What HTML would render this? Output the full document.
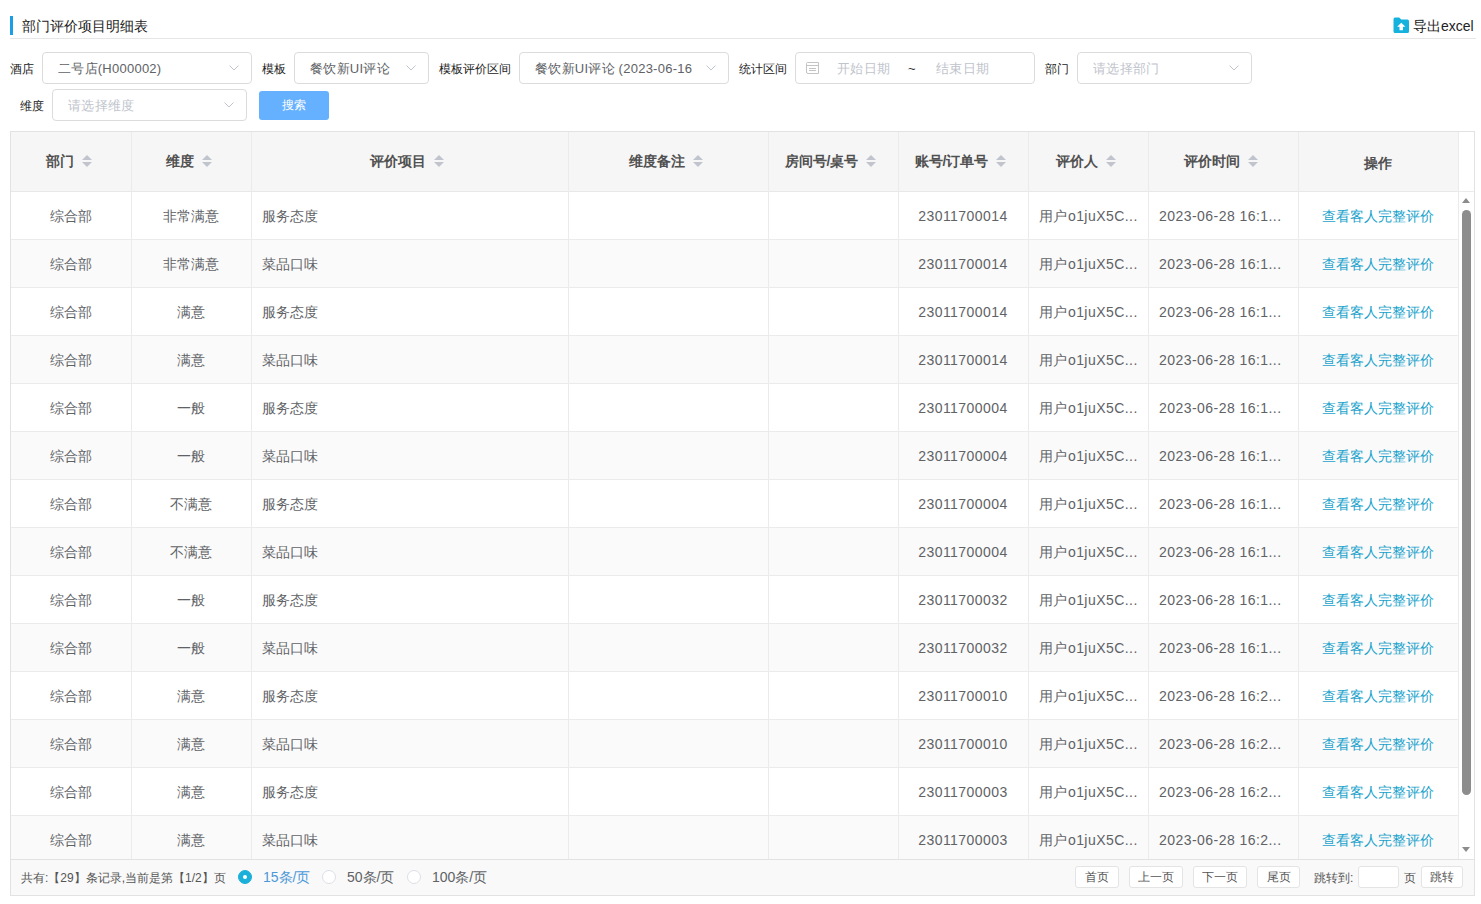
<!DOCTYPE html>
<html><head><meta charset="utf-8">
<style>
*{box-sizing:border-box;margin:0;padding:0}
html,body{width:1481px;height:904px;overflow:hidden;background:#fff;font-family:"Liberation Sans",sans-serif;color:#333}
.abs{position:absolute}
#title{left:10px;top:16px;width:3px;height:19px;background:#1a9ee6}
#ttext{left:22px;top:17px;font-size:14px;line-height:19px;color:#222}
#hline{left:10px;top:38px;width:1466px;height:1px;background:#e6e6e6}
#exp{left:1393px;top:16.5px;width:16.5px;height:16.5px}
#exptext{left:1413px;top:17px;font-size:14px;line-height:19px;color:#222}
.lbl{font-size:12px;line-height:16px;color:#222;top:61px}
.sel{border:1px solid #dcdcdc;border-radius:4px;background:#fff;height:32px}
.sel .t{position:absolute;left:15px;top:0;line-height:31px;font-size:13px;letter-spacing:.25px;color:#606266;white-space:nowrap;overflow:hidden}
.sel .ph{color:#c0c4cc}
.chev{position:absolute;right:12px;top:12px;width:10px;height:6px}
#btn{left:259px;top:91px;width:70px;height:29px;background:#66b1ff;border-radius:3px;color:#fff;font-size:12px;line-height:29px;text-align:center}

#tbl{left:10px;top:131px;width:1465px;height:765px;border:1px solid #e2e2e2}
#thead{left:11px;top:132px;width:1447px;height:60px;background:#f6f6f6;border-bottom:1px solid #e8e8e8}
.th{top:132px;height:59px;line-height:59px;text-align:center;font-size:14px;font-weight:bold;color:#505050;white-space:nowrap}
.th.nos{line-height:62px}
.sort{display:inline-block;position:relative;width:10px;height:12px;margin-left:8px;margin-right:5px;vertical-align:-1px}
.sort b{position:absolute;left:0;width:0;height:0;border-left:5px solid transparent;border-right:5px solid transparent}
.sort .up{top:0;border-bottom:5px solid #c0c4cc}
.sort .dn{top:7px;border-top:5px solid #c0c4cc}
#body{left:11px;top:192px;width:1447px;height:667px;overflow:hidden}
.row{left:11px;width:1447px;height:48px;border-bottom:1px solid #ebebeb}
.even{background:#fafafa}
.td{top:0;height:47px;line-height:49px;font-size:14px;color:#606266;white-space:nowrap}
.td.c{text-align:center}
.td.l{padding-left:11px}
.td.link{color:#1aa3cc}
.vl{top:132px;width:1px;height:727px;background:#ebebeb}
#clip{position:absolute;left:0;top:192px;width:1481px;height:667px;overflow:hidden}
#foot{left:11px;top:859px;width:1463px;height:36px;background:#f9f9f9;border-top:1px solid #e2e2e2}

.ft{top:861px;height:35px;line-height:35px;font-size:12px;color:#555;white-space:nowrap}
.radio{top:870px;width:14px;height:14px;border-radius:50%;border:1px solid #dcdfe6;background:#fff}
.radio.on{background:#1ab0d9;border-color:#1ab0d9}
.radio.on:after{content:"";position:absolute;left:4px;top:4px;width:4px;height:4px;border-radius:50%;background:#fff}
.ft.opt{top:860px;font-size:14px;color:#606266}
.pb{top:866px;height:22px;border:1px solid #e4e4e4;border-radius:3px;background:#fff;font-size:12px;line-height:20px;text-align:center;color:#555}
#sbar{left:1462px;top:210px;width:9px;height:585px;border-radius:5px;background:#8c8c8c}
.sarr{left:1462px;width:0;height:0;border-left:4.5px solid transparent;border-right:4.5px solid transparent}
.lat{letter-spacing:0.45px}
</style></head><body>
<div class="abs" id="title"></div>
<div class="abs" id="ttext">部门评价项目明细表</div>
<div class="abs" id="hline"></div>
<svg class="abs" id="exp" viewBox="0 0 16 16"><path d="M0.5 2Q0.5 0.5 2 0.5H6L8 2.5H14Q15.5 2.5 15.5 4V14Q15.5 15.5 14 15.5H2Q0.5 15.5 0.5 14Z" fill="#14b2dd"/><path d="M8 5.5L4 9.5H6.3V12.8H9.7V9.5H12Z" fill="#fff"/></svg>
<div class="abs" id="exptext">导出excel</div>

<div class="abs lbl" style="left:10px">酒店</div>
<div class="abs sel" style="left:42px;top:52px;width:210px"><span class="t">二号店(H000002)</span><svg class="chev" viewBox="0 0 10 6"><path d="M0.5 0.5L5 5L9.5 0.5" stroke="#c0c4cc" fill="none"/></svg></div>
<div class="abs lbl" style="left:262px">模板</div>
<div class="abs sel" style="left:294px;top:52px;width:135px"><span class="t">餐饮新UI评论</span><svg class="chev" viewBox="0 0 10 6"><path d="M0.5 0.5L5 5L9.5 0.5" stroke="#c0c4cc" fill="none"/></svg></div>
<div class="abs lbl" style="left:439px">模板评价区间</div>
<div class="abs sel" style="left:519px;top:52px;width:210px"><span class="t">餐饮新UI评论 (2023-06-16</span><svg class="chev" viewBox="0 0 10 6"><path d="M0.5 0.5L5 5L9.5 0.5" stroke="#c0c4cc" fill="none"/></svg></div>
<div class="abs lbl" style="left:739px">统计区间</div>
<div class="abs sel" style="left:795px;top:52px;width:240px"><span class="t ph" style="left:41px">开始日期</span><span class="t" style="left:112px;color:#333">~</span><span class="t ph" style="left:140px">结束日期</span></div>
<svg class="abs" style="left:806px;top:62px;width:13px;height:12px" viewBox="0 0 13 12"><path d="M0.5 1.5V10Q0.5 11.5 2 11.5H12.5V0.5H1.5Q0.5 0.5 0.5 1.5Z" fill="none" stroke="#c4c4c4"/><path d="M0.5 3.5h12M3 6.5h7M3 8.5h7" stroke="#c4c4c4" fill="none"/></svg>
<div class="abs lbl" style="left:1045px">部门</div>
<div class="abs sel" style="left:1077px;top:52px;width:175px"><span class="t ph">请选择部门</span><svg class="chev" viewBox="0 0 10 6"><path d="M0.5 0.5L5 5L9.5 0.5" stroke="#c0c4cc" fill="none"/></svg></div>
<div class="abs lbl" style="left:20px;top:98px">维度</div>
<div class="abs sel" style="left:52px;top:89px;width:195px"><span class="t ph">请选择维度</span><svg class="chev" viewBox="0 0 10 6"><path d="M0.5 0.5L5 5L9.5 0.5" stroke="#c0c4cc" fill="none"/></svg></div>
<div class="abs" id="btn">搜索</div>

<div class="abs" id="tbl"></div>
<div class="abs" id="thead"></div>
<div class="abs th" style="left:11px;width:120px">部门<i class="sort"><b class="up"></b><b class="dn"></b></i></div>
<div class="abs th" style="left:131px;width:120px">维度<i class="sort"><b class="up"></b><b class="dn"></b></i></div>
<div class="abs th" style="left:251px;width:317px">评价项目<i class="sort"><b class="up"></b><b class="dn"></b></i></div>
<div class="abs th" style="left:568px;width:200px">维度备注<i class="sort"><b class="up"></b><b class="dn"></b></i></div>
<div class="abs th" style="left:768px;width:130px">房间号/桌号<i class="sort"><b class="up"></b><b class="dn"></b></i></div>
<div class="abs th" style="left:898px;width:130px">账号/订单号<i class="sort"><b class="up"></b><b class="dn"></b></i></div>
<div class="abs th" style="left:1028px;width:120px">评价人<i class="sort"><b class="up"></b><b class="dn"></b></i></div>
<div class="abs th" style="left:1148px;width:150px">评价时间<i class="sort"><b class="up"></b><b class="dn"></b></i></div>
<div class="abs th nos" style="left:1298px;width:160px">操作</div>
<div id="clip">
<div class="abs row odd" style="top:0px"></div>
<div class="abs td c" style="left:11px;width:120px;top:0px">综合部</div>
<div class="abs td c" style="left:131px;width:120px;top:0px">非常满意</div>
<div class="abs td l" style="left:251px;width:317px;top:0px">服务态度</div>
<div class="abs td c lat" style="left:898px;width:130px;top:0px">23011700014</div>
<div class="abs td l lat" style="left:1028px;width:120px;top:0px">用户o1juX5C...</div>
<div class="abs td l lat" style="left:1148px;width:150px;top:0px">2023-06-28 16:1...</div>
<div class="abs td c link" style="left:1298px;width:160px;top:0px">查看客人完整评价</div>
<div class="abs row even" style="top:48px"></div>
<div class="abs td c" style="left:11px;width:120px;top:48px">综合部</div>
<div class="abs td c" style="left:131px;width:120px;top:48px">非常满意</div>
<div class="abs td l" style="left:251px;width:317px;top:48px">菜品口味</div>
<div class="abs td c lat" style="left:898px;width:130px;top:48px">23011700014</div>
<div class="abs td l lat" style="left:1028px;width:120px;top:48px">用户o1juX5C...</div>
<div class="abs td l lat" style="left:1148px;width:150px;top:48px">2023-06-28 16:1...</div>
<div class="abs td c link" style="left:1298px;width:160px;top:48px">查看客人完整评价</div>
<div class="abs row odd" style="top:96px"></div>
<div class="abs td c" style="left:11px;width:120px;top:96px">综合部</div>
<div class="abs td c" style="left:131px;width:120px;top:96px">满意</div>
<div class="abs td l" style="left:251px;width:317px;top:96px">服务态度</div>
<div class="abs td c lat" style="left:898px;width:130px;top:96px">23011700014</div>
<div class="abs td l lat" style="left:1028px;width:120px;top:96px">用户o1juX5C...</div>
<div class="abs td l lat" style="left:1148px;width:150px;top:96px">2023-06-28 16:1...</div>
<div class="abs td c link" style="left:1298px;width:160px;top:96px">查看客人完整评价</div>
<div class="abs row even" style="top:144px"></div>
<div class="abs td c" style="left:11px;width:120px;top:144px">综合部</div>
<div class="abs td c" style="left:131px;width:120px;top:144px">满意</div>
<div class="abs td l" style="left:251px;width:317px;top:144px">菜品口味</div>
<div class="abs td c lat" style="left:898px;width:130px;top:144px">23011700014</div>
<div class="abs td l lat" style="left:1028px;width:120px;top:144px">用户o1juX5C...</div>
<div class="abs td l lat" style="left:1148px;width:150px;top:144px">2023-06-28 16:1...</div>
<div class="abs td c link" style="left:1298px;width:160px;top:144px">查看客人完整评价</div>
<div class="abs row odd" style="top:192px"></div>
<div class="abs td c" style="left:11px;width:120px;top:192px">综合部</div>
<div class="abs td c" style="left:131px;width:120px;top:192px">一般</div>
<div class="abs td l" style="left:251px;width:317px;top:192px">服务态度</div>
<div class="abs td c lat" style="left:898px;width:130px;top:192px">23011700004</div>
<div class="abs td l lat" style="left:1028px;width:120px;top:192px">用户o1juX5C...</div>
<div class="abs td l lat" style="left:1148px;width:150px;top:192px">2023-06-28 16:1...</div>
<div class="abs td c link" style="left:1298px;width:160px;top:192px">查看客人完整评价</div>
<div class="abs row even" style="top:240px"></div>
<div class="abs td c" style="left:11px;width:120px;top:240px">综合部</div>
<div class="abs td c" style="left:131px;width:120px;top:240px">一般</div>
<div class="abs td l" style="left:251px;width:317px;top:240px">菜品口味</div>
<div class="abs td c lat" style="left:898px;width:130px;top:240px">23011700004</div>
<div class="abs td l lat" style="left:1028px;width:120px;top:240px">用户o1juX5C...</div>
<div class="abs td l lat" style="left:1148px;width:150px;top:240px">2023-06-28 16:1...</div>
<div class="abs td c link" style="left:1298px;width:160px;top:240px">查看客人完整评价</div>
<div class="abs row odd" style="top:288px"></div>
<div class="abs td c" style="left:11px;width:120px;top:288px">综合部</div>
<div class="abs td c" style="left:131px;width:120px;top:288px">不满意</div>
<div class="abs td l" style="left:251px;width:317px;top:288px">服务态度</div>
<div class="abs td c lat" style="left:898px;width:130px;top:288px">23011700004</div>
<div class="abs td l lat" style="left:1028px;width:120px;top:288px">用户o1juX5C...</div>
<div class="abs td l lat" style="left:1148px;width:150px;top:288px">2023-06-28 16:1...</div>
<div class="abs td c link" style="left:1298px;width:160px;top:288px">查看客人完整评价</div>
<div class="abs row even" style="top:336px"></div>
<div class="abs td c" style="left:11px;width:120px;top:336px">综合部</div>
<div class="abs td c" style="left:131px;width:120px;top:336px">不满意</div>
<div class="abs td l" style="left:251px;width:317px;top:336px">菜品口味</div>
<div class="abs td c lat" style="left:898px;width:130px;top:336px">23011700004</div>
<div class="abs td l lat" style="left:1028px;width:120px;top:336px">用户o1juX5C...</div>
<div class="abs td l lat" style="left:1148px;width:150px;top:336px">2023-06-28 16:1...</div>
<div class="abs td c link" style="left:1298px;width:160px;top:336px">查看客人完整评价</div>
<div class="abs row odd" style="top:384px"></div>
<div class="abs td c" style="left:11px;width:120px;top:384px">综合部</div>
<div class="abs td c" style="left:131px;width:120px;top:384px">一般</div>
<div class="abs td l" style="left:251px;width:317px;top:384px">服务态度</div>
<div class="abs td c lat" style="left:898px;width:130px;top:384px">23011700032</div>
<div class="abs td l lat" style="left:1028px;width:120px;top:384px">用户o1juX5C...</div>
<div class="abs td l lat" style="left:1148px;width:150px;top:384px">2023-06-28 16:1...</div>
<div class="abs td c link" style="left:1298px;width:160px;top:384px">查看客人完整评价</div>
<div class="abs row even" style="top:432px"></div>
<div class="abs td c" style="left:11px;width:120px;top:432px">综合部</div>
<div class="abs td c" style="left:131px;width:120px;top:432px">一般</div>
<div class="abs td l" style="left:251px;width:317px;top:432px">菜品口味</div>
<div class="abs td c lat" style="left:898px;width:130px;top:432px">23011700032</div>
<div class="abs td l lat" style="left:1028px;width:120px;top:432px">用户o1juX5C...</div>
<div class="abs td l lat" style="left:1148px;width:150px;top:432px">2023-06-28 16:1...</div>
<div class="abs td c link" style="left:1298px;width:160px;top:432px">查看客人完整评价</div>
<div class="abs row odd" style="top:480px"></div>
<div class="abs td c" style="left:11px;width:120px;top:480px">综合部</div>
<div class="abs td c" style="left:131px;width:120px;top:480px">满意</div>
<div class="abs td l" style="left:251px;width:317px;top:480px">服务态度</div>
<div class="abs td c lat" style="left:898px;width:130px;top:480px">23011700010</div>
<div class="abs td l lat" style="left:1028px;width:120px;top:480px">用户o1juX5C...</div>
<div class="abs td l lat" style="left:1148px;width:150px;top:480px">2023-06-28 16:2...</div>
<div class="abs td c link" style="left:1298px;width:160px;top:480px">查看客人完整评价</div>
<div class="abs row even" style="top:528px"></div>
<div class="abs td c" style="left:11px;width:120px;top:528px">综合部</div>
<div class="abs td c" style="left:131px;width:120px;top:528px">满意</div>
<div class="abs td l" style="left:251px;width:317px;top:528px">菜品口味</div>
<div class="abs td c lat" style="left:898px;width:130px;top:528px">23011700010</div>
<div class="abs td l lat" style="left:1028px;width:120px;top:528px">用户o1juX5C...</div>
<div class="abs td l lat" style="left:1148px;width:150px;top:528px">2023-06-28 16:2...</div>
<div class="abs td c link" style="left:1298px;width:160px;top:528px">查看客人完整评价</div>
<div class="abs row odd" style="top:576px"></div>
<div class="abs td c" style="left:11px;width:120px;top:576px">综合部</div>
<div class="abs td c" style="left:131px;width:120px;top:576px">满意</div>
<div class="abs td l" style="left:251px;width:317px;top:576px">服务态度</div>
<div class="abs td c lat" style="left:898px;width:130px;top:576px">23011700003</div>
<div class="abs td l lat" style="left:1028px;width:120px;top:576px">用户o1juX5C...</div>
<div class="abs td l lat" style="left:1148px;width:150px;top:576px">2023-06-28 16:2...</div>
<div class="abs td c link" style="left:1298px;width:160px;top:576px">查看客人完整评价</div>
<div class="abs row even" style="top:624px"></div>
<div class="abs td c" style="left:11px;width:120px;top:624px">综合部</div>
<div class="abs td c" style="left:131px;width:120px;top:624px">满意</div>
<div class="abs td l" style="left:251px;width:317px;top:624px">菜品口味</div>
<div class="abs td c lat" style="left:898px;width:130px;top:624px">23011700003</div>
<div class="abs td l lat" style="left:1028px;width:120px;top:624px">用户o1juX5C...</div>
<div class="abs td l lat" style="left:1148px;width:150px;top:624px">2023-06-28 16:2...</div>
<div class="abs td c link" style="left:1298px;width:160px;top:624px">查看客人完整评价</div>
</div>
<div class="abs" id="foot"></div>
<div class="abs vl" style="left:131px"></div>
<div class="abs vl" style="left:251px"></div>
<div class="abs vl" style="left:568px"></div>
<div class="abs vl" style="left:768px"></div>
<div class="abs vl" style="left:898px"></div>
<div class="abs vl" style="left:1028px"></div>
<div class="abs vl" style="left:1148px"></div>
<div class="abs vl" style="left:1298px"></div>
<div class="abs ft" style="left:21px">共有:【29】条记录,当前是第【1/2】页</div>
<div class="abs radio on" style="left:238px"></div>
<div class="abs ft opt" style="left:263px;color:#4a98d8">15条/页</div>
<div class="abs radio" style="left:322px"></div>
<div class="abs ft opt" style="left:347px">50条/页</div>
<div class="abs radio" style="left:407px"></div>
<div class="abs ft opt" style="left:432px">100条/页</div>
<div class="abs pb" style="left:1075px;width:44px;padding-right:1px">首页</div>
<div class="abs pb" style="left:1129px;width:54px">上一页</div>
<div class="abs pb" style="left:1193px;width:54px">下一页</div>
<div class="abs pb" style="left:1257px;width:43px">尾页</div>
<div class="abs ft" style="left:1314px;font-size:12px">跳转到:</div>
<div class="abs pb" style="left:1358px;width:41px"></div>
<div class="abs ft" style="left:1404px">页</div>
<div class="abs pb" style="left:1421px;width:42px">跳转</div>
<div class="abs" style="left:1458px;top:132px;width:1px;height:727px;background:#ebebeb"></div>
<div class="abs" style="left:1459px;top:191px;width:15px;height:1px;background:#ebebeb"></div>
<div class="abs" id="sbar"></div>
<div class="abs sarr" style="top:198px;border-bottom:5px solid #8c8c8c"></div>
<div class="abs sarr" style="top:847px;border-top:5px solid #8c8c8c"></div>

</body></html>
